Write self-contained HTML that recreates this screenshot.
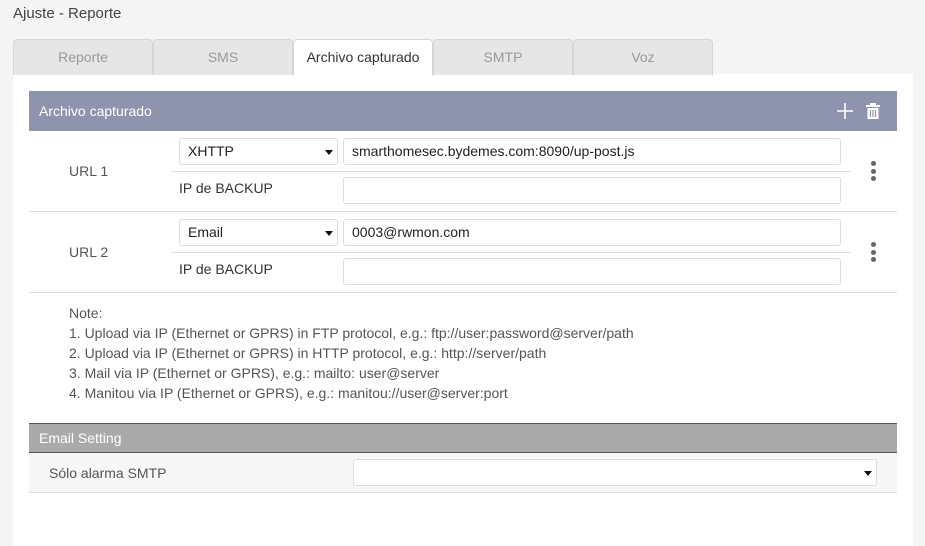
<!DOCTYPE html>
<html><head><meta charset="utf-8"><style>
*{box-sizing:border-box;margin:0;padding:0}
body{width:925px;height:546px;background:#f4f4f4;font-family:"Liberation Sans",Arial,sans-serif;position:relative;overflow:hidden;color:#333}
.a{position:absolute}
.title{left:13px;top:5px;font-size:15px;color:#444}
.tab{top:39px;height:36px;width:140px;background:#e6e6e6;border:1px solid #d6d6d6;border-bottom:none;border-radius:4px 4px 0 0;text-align:center;line-height:35px;font-size:14px;color:#999}
.tab.on{background:#fff;color:#333;height:37px}
.panel{left:13px;top:74px;width:900px;height:472px;background:#fff}
.hdr{left:29px;top:91px;width:868px;height:40px;background:#8f94ae;color:#fff;font-size:14px;line-height:40px;padding-left:10px}
.hr{height:1px;background:#ddd}
.lbl{font-size:14px;color:#555}
.sel,.inp{height:27px;border:1px solid #ddd;border-radius:3px;background:#fff;font-size:14px;color:#222;line-height:25px;padding-left:8px}
.sel:after{content:"";position:absolute;right:4px;top:11px;border-left:4px solid transparent;border-right:4px solid transparent;border-top:5px solid #111}
.dots{width:4px}
.dots i{display:block;width:5px;height:5px;border-radius:50%;background:#666;margin-bottom:2.5px}
.note{left:69px;top:303px;font-size:14px;color:#555;line-height:20px}
.eh{left:29px;top:423px;width:868px;height:30px;background:#aaa;border-top:1px solid #555;border-bottom:1px solid #555;color:#fff;font-size:14px;line-height:28px;padding-left:10px}
.er{left:29px;top:453px;width:868px;height:40px;background:#f7f7f7;border-bottom:1px solid #ddd}
</style></head><body>
<div class="a title">Ajuste - Reporte</div>
<div class="a panel"></div>
<div class="a tab" style="left:13px">Reporte</div>
<div class="a tab" style="left:153px">SMS</div>
<div class="a tab on" style="left:293px">Archivo capturado</div>
<div class="a tab" style="left:433px">SMTP</div>
<div class="a tab" style="left:573px">Voz</div>
<div class="a hdr">Archivo capturado</div>
<svg class="a" style="left:836px;top:102px" width="18" height="18"><path d="M9 1V17M1 9H17" stroke="#fff" stroke-width="1.6"/></svg>
<svg class="a" style="left:865px;top:102px" width="16" height="18"><rect x="1" y="3" width="14" height="2" fill="#fff"/><rect x="5" y="1" width="6" height="2" fill="#fff"/><path d="M2.5 6H13.5V17H2.5Z" fill="#fff"/><path d="M5.5 8V15M8 8V15M10.5 8V15" stroke="#8f94ae" stroke-width="1.2"/></svg>

<div class="a lbl" style="left:69px;top:163px">URL 1</div>
<div class="a sel" style="left:179px;top:138px;width:159px">XHTTP</div>
<div class="a inp" style="left:343px;top:138px;width:498px">smarthomesec.bydemes.com:8090/up-post.js</div>
<div class="a hr" style="left:171px;top:171px;width:680px"></div>
<div class="a lbl" style="left:179px;top:180px;color:#333">IP de BACKUP</div>
<div class="a inp" style="left:343px;top:177px;width:498px"></div>
<div class="a dots" style="left:871px;top:161px"><i></i><i></i><i></i></div>
<div class="a hr" style="left:29px;top:211px;width:868px"></div>

<div class="a lbl" style="left:69px;top:244px">URL 2</div>
<div class="a sel" style="left:179px;top:219px;width:159px">Email</div>
<div class="a inp" style="left:343px;top:219px;width:498px">0003@rwmon.com</div>
<div class="a hr" style="left:171px;top:252px;width:680px"></div>
<div class="a lbl" style="left:179px;top:261px;color:#333">IP de BACKUP</div>
<div class="a inp" style="left:343px;top:258px;width:498px"></div>
<div class="a dots" style="left:871px;top:242px"><i></i><i></i><i></i></div>
<div class="a hr" style="left:29px;top:292px;width:868px"></div>

<div class="a note">Note:<br>1. Upload via IP (Ethernet or GPRS) in FTP protocol, e.g.: ftp://user:password@server/path<br>2. Upload via IP (Ethernet or GPRS) in HTTP protocol, e.g.: http://server/path<br>3. Mail via IP (Ethernet or GPRS), e.g.: mailto: user@server<br>4. Manitou via IP (Ethernet or GPRS), e.g.: manitou://user@server:port</div>

<div class="a eh">Email Setting</div>
<div class="a er"></div>
<div class="a lbl" style="left:49px;top:465px">Sólo alarma SMTP</div>
<div class="a sel" style="left:353px;top:459px;width:524px"></div>
</body></html>
